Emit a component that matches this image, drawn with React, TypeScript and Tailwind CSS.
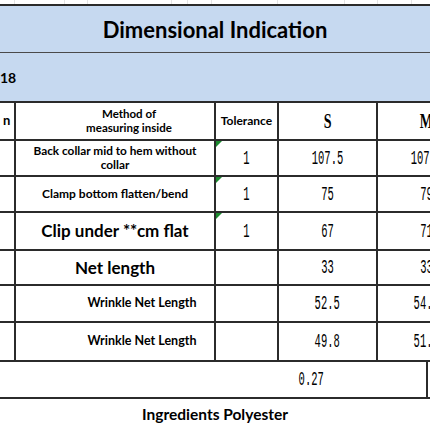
import React from "react";

const label = "font-['Lato','Open_Sans',sans-serif] font-bold text-black";
const grid = "grid grid-cols-[14px_198px_61px_97px_97px] gap-[2px]";

type Row = {
  h: string;
  method: React.ReactNode;
  tol?: string;
  s: string;
  m: string;
  flag?: boolean;
};

const rows: Row[] = [
  {
    h: "h-[34px]",
    method: (
      <span className="text-[11.8px] leading-[14px]">
        Back collar mid to hem without
        <br />
        collar
      </span>
    ),
    tol: "1",
    s: "107.5",
    m: "107.5",
    flag: true,
  },
  {
    h: "h-[34px]",
    method: <span className="text-[12px]">Clamp bottom flatten/bend</span>,
    tol: "1",
    s: "75",
    m: "79",
    flag: true,
  },
  {
    h: "h-[36px]",
    method: <span className="text-[17px]">Clip under **cm flat</span>,
    tol: "1",
    s: "67",
    m: "71",
    flag: true,
  },
  {
    h: "h-[33px]",
    method: <span className="text-[17px]">Net length</span>,
    s: "33",
    m: "33",
  },
  {
    h: "h-[35px]",
    method: <span className="pl-[54px] text-[12.5px]">Wrinkle Net Length</span>,
    s: "52.5",
    m: "54.5",
  },
  {
    h: "h-[37px]",
    method: <span className="pl-[54px] text-[12.5px]">Wrinkle Net Length</span>,
    s: "49.8",
    m: "51.8",
  },
];

function Num({ children }: { children: React.ReactNode }) {
  return (
    <span className="inline-block scale-x-[0.5] font-['Liberation_Mono',monospace] text-[21px] leading-none text-black">
      {children}
    </span>
  );
}

function Cell({ children, className = "" }: { children?: React.ReactNode; className?: string }) {
  return <div className={`relative flex items-center justify-center overflow-hidden bg-white ${className}`}>{children}</div>;
}

export default function App() {
  return (
    <div className="h-[430px] w-[430px] overflow-hidden bg-white">
      {/* faint gridlines above the sheet */}
      <div className="flex h-[4px]">
        {[15, 50, 23, 84, 16, 24, 66, 67, 33, 34].map((w, i) => (
          <div key={i} style={{ width: w }} className="shrink-0 border-r border-[#e4e4e4]" />
        ))}
      </div>
      <div className="h-[2px] bg-[#2b2b2b]" />

      <div className={`flex h-[46px] items-center justify-center bg-[#c6d9f0] ${label} text-[22px]`}>
        Dimensional Indication
      </div>
      <div className="h-px bg-[#4a4a4a]" />
      <div className={`flex h-[48px] items-center bg-[#c6d9f0] ${label} text-[14px]`}>18</div>

      <div className="w-[475px] bg-[#2b2b2b] pb-[2px] pt-[2px]">
        <div className={grid}>
          <Cell className={`h-[36px] justify-start pl-[3px] ${label} text-[13px]`}>n</Cell>
          <Cell className={`${label} pl-[28px] text-center text-[11.5px] leading-[14px]`}>
            <span>
              Method of
              <br />
              measuring inside
            </span>
          </Cell>
          <Cell className={`${label} text-[12px]`}>Tolerance</Cell>
          <Cell>
            <span className="inline-block scale-x-[0.7] font-['Liberation_Serif',serif] text-[20px] font-bold">S</span>
          </Cell>
          <Cell>
            <span className="inline-block scale-x-[0.7] font-['Liberation_Serif',serif] text-[20px] font-bold">M</span>
          </Cell>

          {rows.map((r, i) => (
            <React.Fragment key={i}>
              <Cell className={r.h} />
              <Cell className={`${r.h} ${label} text-center`}>{r.method}</Cell>
              <Cell className={r.h}>
                {r.flag && (
                  <span className="absolute left-0 top-0 h-0 w-0 border-r-[6px] border-t-[6px] border-r-transparent border-t-[#1b8a2e]" />
                )}
                {r.tol && <Num>{r.tol}</Num>}
              </Cell>
              <Cell className={r.h}>
                <Num>{r.s}</Num>
              </Cell>
              <Cell className={r.h}>
                <Num>{r.m}</Num>
              </Cell>
            </React.Fragment>
          ))}
        </div>
      </div>

      <div className="grid h-[37px] grid-cols-[426px_2px_2px] border-b-2 border-[#2b2b2b]">
        <div className="flex items-center pl-[286px]">
          <Num>0.27</Num>
        </div>
        <div className="bg-[#2b2b2b]" />
        <div />
      </div>

      <div className={`flex h-[32px] items-center justify-center ${label} text-[15.5px]`}>Ingredients Polyester</div>
    </div>
  );
}
